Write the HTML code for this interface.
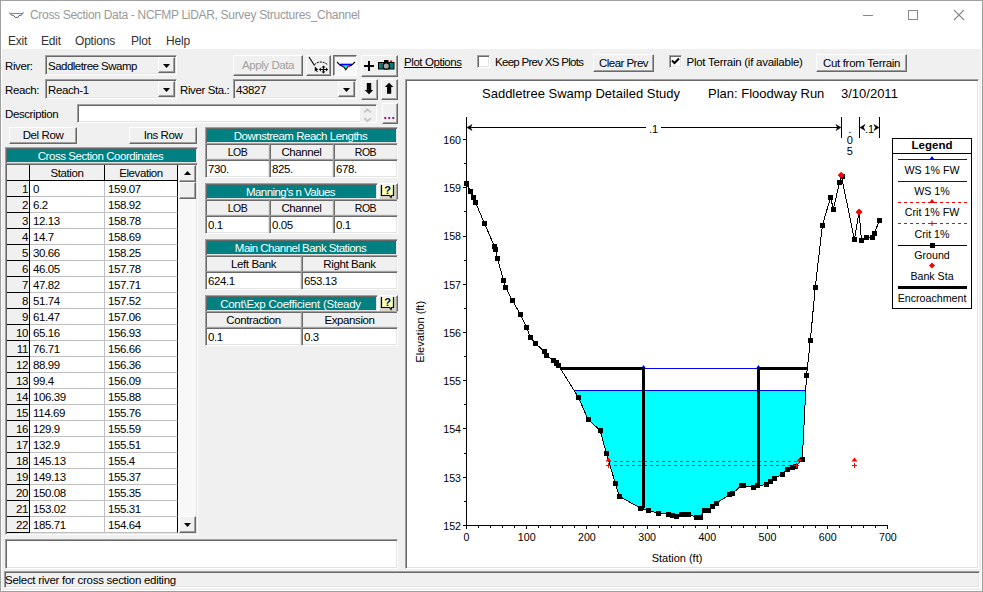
<!DOCTYPE html>
<html><head><meta charset="utf-8"><title>Cross Section Data</title>
<style>
html,body{margin:0;padding:0;background:#fff;}
body{width:983px;height:592px;overflow:hidden;position:relative;font-family:"Liberation Sans",sans-serif;font-size:11px;color:#000;}
.a{position:absolute;box-sizing:border-box;white-space:nowrap;}
.win{left:0;top:0;width:983px;height:592px;background:#fff;border:1px solid #a0a0a0;}
.grey{background:#f0f0f0;}
.t{font-size:11.5px;letter-spacing:-0.4px;line-height:13px;}
.sunk{border:1px solid;border-color:#808080 #fff #fff #808080;}
.sunk2{border:1px solid;border-color:#a0a0a0 #fff #fff #a0a0a0;box-shadow:inset 1px 1px 0 #696969, inset -1px -1px 0 #e3e3e3;}
.btn{background:#f0f0f0;border:1px solid;border-color:#fff #696969 #696969 #fff;box-shadow:inset -1px -1px 0 #a0a0a0, inset 1px 1px 0 #f0f0f0;text-align:center;}
.teal{background:#008080;color:#fff;text-align:center;border:1px solid;border-color:#a0a0a0 #fff #fff #a0a0a0;box-shadow:inset 1px 1px 0 #696969, inset -1px -1px 0 #e3e3e3;line-height:17px;padding-right:2px;}
.ch{background:#f0f0f0;text-align:center;border:1px solid;border-color:#a0a0a0 #fff #fff #a0a0a0;box-shadow:inset 1px 1px 0 #696969, inset -1px -1px 0 #e3e3e3;line-height:17px;}
.cv{background:#fff;border:1px solid;border-color:#a0a0a0 #fff #fff #a0a0a0;box-shadow:inset 1px 1px 0 #696969, inset -1px -1px 0 #e3e3e3;line-height:18px;padding-left:2px;}
.menu{font-size:12px;color:#333;top:33px;line-height:16px;letter-spacing:-0.2px;}
.rh{background:#f0f0f0;border-right:1px solid #000;border-bottom:1px solid #000;text-align:right;padding-right:1px;line-height:17px;height:16px;width:23px;left:7px;}
.c1{background:#fff;border-right:1px solid #c0c0c0;border-bottom:1px solid #c0c0c0;line-height:17px;height:16px;width:75px;left:30px;padding-left:3px;}
.c2{background:#fff;border-right:1px solid #000;border-bottom:1px solid #c0c0c0;line-height:17px;height:16px;width:73px;left:105px;padding-left:3px;}
</style></head><body>
<div class="a win"></div>
<div class="a grey" style="left:2px;top:49px;width:979px;height:541px;"></div>

<svg class="a" style="left:4px;top:4px" width="30" height="22" viewBox="4 4 30 22"><path d="M9.2 12.4L11.2 15L13.7 15.5L15.2 17.4H17.9L19 15.6L21.5 15.1L23.5 12.2" fill="none" stroke="#666" stroke-width="1"/><path d="M10.5 13.5H23" stroke="#7474ff" stroke-width="1.1"/></svg>
<div class="a" style="left:30px;top:7px;font-size:12px;color:#999;line-height:16px;letter-spacing:-0.31px;" id="title">Cross Section Data - NCFMP LiDAR, Survey Structures_Channel</div>
<svg class="a" style="left:855px;top:5px" width="120" height="22" viewBox="0 0 120 22"><path d="M8 10.5H18" stroke="#888" stroke-width="1"/><rect x="53.5" y="5.5" width="9" height="9" fill="none" stroke="#888" stroke-width="1"/><path d="M99 5L109 15M109 5L99 15" stroke="#888" stroke-width="1.1"/></svg>
<div class="a menu" style="left:8px">Exit</div>
<div class="a menu" style="left:41px">Edit</div>
<div class="a menu" style="left:75px">Options</div>
<div class="a menu" style="left:131px">Plot</div>
<div class="a menu" style="left:166px">Help</div>
<div class="a t" style="left:5px;top:60px">River:</div>
<div class="a t" style="left:5px;top:84px">Reach:</div>
<div class="a t" style="left:5px;top:108px">Description</div>
<div class="a t" style="left:180px;top:84px">River Sta.:</div>
<div class="a sunk2" style="left:45px;top:55px;width:132px;height:20px;background:#f0f0f0"></div>
<div class="a t" style="left:48px;top:60px;letter-spacing:-0.52px;">Saddletree Swamp</div>
<div class="a btn" style="left:158px;top:57px;width:17px;height:16px"></div>
<svg class="a" style="left:163px;top:64px" width="7" height="4"><path d="M0 0H7L3.5 4Z" fill="#000"/></svg>
<div class="a sunk2" style="left:45px;top:79px;width:132px;height:20px;background:#f0f0f0"></div>
<div class="a t" style="left:48px;top:84px">Reach-1</div>
<div class="a btn" style="left:158px;top:81px;width:17px;height:16px"></div>
<svg class="a" style="left:163px;top:88px" width="7" height="4"><path d="M0 0H7L3.5 4Z" fill="#000"/></svg>
<div class="a sunk2" style="left:233px;top:79px;width:124px;height:20px;background:#f0f0f0"></div>
<div class="a t" style="left:236px;top:84px">43827</div>
<div class="a btn" style="left:338px;top:81px;width:17px;height:16px"></div>
<svg class="a" style="left:343px;top:88px" width="7" height="4"><path d="M0 0H7L3.5 4Z" fill="#000"/></svg>
<div class="a btn t" style="left:233px;top:55px;width:70px;height:21px;color:#a0a0a0;line-height:18px;letter-spacing:-0.42px;">Apply Data</div>
<div class="a btn" style="left:306px;top:55px;width:25px;height:21px;"></div>
<div class="a" style="left:333px;top:55px;width:24px;height:21px;background:#f8f8f8;border:1px solid;border-color:#696969 #fff #fff #696969;box-shadow:inset 1px 1px 0 #a0a0a0;"></div>
<div class="a btn" style="left:361px;top:55px;width:37px;height:22px;"></div>
<svg class="a" style="left:300px;top:50px" width="100" height="30" viewBox="300 50 100 30">
<path d="M309 57L314.5 65.5" fill="none" stroke="#000" stroke-width="1.1"/>
<path d="M314.5 64.8C316 63 318 62.2 320 62C323 61.8 325 62.8 327.5 64.5" fill="none" stroke="#000" stroke-width="1" stroke-dasharray="2 1"/>
<path d="M314.8 66.5L318.3 69.8L316.8 70L317.8 71.8L317 72.2L316 70.4L314.8 71.4Z" fill="#000"/>
<path d="M319.5 69.5H327.5M323.5 66V73" stroke="#000" stroke-width="1.2" fill="none"/>
<path d="M319 69.5l2-2v4zM328 69.5l-2-2v4zM323.5 65.5l-2 2h4zM323.5 73.5l-2-2h4z" fill="#000"/>
<path d="M340.5 64.5H351.5L347.8 67L345.8 69.5L343.7 67Z" fill="#00ffff"/>
<path d="M340 64.5H352" stroke="#0000ff" stroke-width="1.6"/>
<path d="M337 62L340.2 65.3L343.7 66.8L345.8 69.7L347.8 66.8L351.4 65.3L355 62" fill="none" stroke="#000" stroke-width="1.1"/>
<rect x="342.7" y="66" width="1" height="1" fill="#f00"/><rect x="347.8" y="66" width="1" height="1" fill="#f00"/>
<path d="M364 66H374M369 61V71" stroke="#000" stroke-width="2"/>
<rect x="378.5" y="62.5" width="15.5" height="6.5" fill="#008080" stroke="#000"/>
<rect x="384" y="60" width="4.5" height="2.5" fill="#000"/>
<rect x="390" y="60.5" width="2.2" height="1.5" fill="#f00"/>
<circle cx="386.3" cy="66" r="3.2" fill="#a8a8a8" stroke="#000" stroke-width="1.3"/>
</svg>
<div class="a btn" style="left:361px;top:79px;width:17px;height:21px;"></div>
<div class="a btn" style="left:381px;top:79px;width:17px;height:21px;"></div>
<svg class="a" style="left:360px;top:78px" width="40" height="24" viewBox="360 78 40 24"><path d="M366.8 83H371.2V90H373.3L369 94.3L364.7 90H366.8Z" fill="#000"/><path d="M387 93.7H391.2V87H393.4L389.1 82.7L384.8 87H387Z" fill="#000"/></svg>
<div class="a sunk2" style="left:77px;top:104px;width:300px;height:19px;background:#fff"></div>
<div class="a" style="left:360px;top:106px;width:16px;height:16px;background:#f0f0f0"></div>
<svg class="a" style="left:362px;top:107px" width="12" height="16" viewBox="362 107 12 16"><path d="M364.3 112.3L367.5 109.3L370.7 112.3" fill="none" stroke="#c4c4c4" stroke-width="1.8"/><path d="M364.3 118.2L367.5 121.2L370.7 118.2" fill="none" stroke="#c4c4c4" stroke-width="1.8"/></svg>
<div class="a btn" style="left:382px;top:103px;width:16px;height:21px;"></div>
<div class="a" style="left:383.5px;top:109px;width:12px;height:12px;font-size:12px;line-height:12px;color:#800080;font-weight:bold;letter-spacing:0.6px;text-align:center;">...</div>
<div class="a btn t" style="left:9px;top:127px;width:68px;height:17px;line-height:15px;">Del Row</div>
<div class="a btn t" style="left:129px;top:127px;width:68px;height:17px;line-height:15px;">Ins Row</div>
<div class="a teal t" style="left:5px;top:147px;width:193px;height:17px;letter-spacing:-0.45px;">Cross Section Coordinates</div>
<div class="a sunk2" style="left:5px;top:163px;width:193px;height:372px;background:#fff;"></div>
<div class="a" style="left:7px;top:165px;width:23px;height:16px;background:#f0f0f0;border-right:1px solid #000;border-bottom:1px solid #000;"></div>
<div class="a t" style="left:30px;top:165px;width:75px;height:16px;background:#f0f0f0;border-right:1px solid #000;border-bottom:1px solid #000;text-align:center;line-height:17px;">Station</div>
<div class="a t" style="left:105px;top:165px;width:73px;height:16px;background:#f0f0f0;border-right:1px solid #000;border-bottom:1px solid #000;text-align:center;line-height:17px;">Elevation</div>
<div class="a t rh" style="top:181px">1</div><div class="a t c1" style="top:181px">0</div><div class="a t c2" style="top:181px">159.07</div>
<div class="a t rh" style="top:197px">2</div><div class="a t c1" style="top:197px">6.2</div><div class="a t c2" style="top:197px">158.92</div>
<div class="a t rh" style="top:213px">3</div><div class="a t c1" style="top:213px">12.13</div><div class="a t c2" style="top:213px">158.78</div>
<div class="a t rh" style="top:229px">4</div><div class="a t c1" style="top:229px">14.7</div><div class="a t c2" style="top:229px">158.69</div>
<div class="a t rh" style="top:245px">5</div><div class="a t c1" style="top:245px">30.66</div><div class="a t c2" style="top:245px">158.25</div>
<div class="a t rh" style="top:261px">6</div><div class="a t c1" style="top:261px">46.05</div><div class="a t c2" style="top:261px">157.78</div>
<div class="a t rh" style="top:277px">7</div><div class="a t c1" style="top:277px">47.82</div><div class="a t c2" style="top:277px">157.71</div>
<div class="a t rh" style="top:293px">8</div><div class="a t c1" style="top:293px">51.74</div><div class="a t c2" style="top:293px">157.52</div>
<div class="a t rh" style="top:309px">9</div><div class="a t c1" style="top:309px">61.47</div><div class="a t c2" style="top:309px">157.06</div>
<div class="a t rh" style="top:325px">10</div><div class="a t c1" style="top:325px">65.16</div><div class="a t c2" style="top:325px">156.93</div>
<div class="a t rh" style="top:341px">11</div><div class="a t c1" style="top:341px">76.71</div><div class="a t c2" style="top:341px">156.66</div>
<div class="a t rh" style="top:357px">12</div><div class="a t c1" style="top:357px">88.99</div><div class="a t c2" style="top:357px">156.36</div>
<div class="a t rh" style="top:373px">13</div><div class="a t c1" style="top:373px">99.4</div><div class="a t c2" style="top:373px">156.09</div>
<div class="a t rh" style="top:389px">14</div><div class="a t c1" style="top:389px">106.39</div><div class="a t c2" style="top:389px">155.88</div>
<div class="a t rh" style="top:405px">15</div><div class="a t c1" style="top:405px">114.69</div><div class="a t c2" style="top:405px">155.76</div>
<div class="a t rh" style="top:421px">16</div><div class="a t c1" style="top:421px">129.9</div><div class="a t c2" style="top:421px">155.59</div>
<div class="a t rh" style="top:437px">17</div><div class="a t c1" style="top:437px">132.9</div><div class="a t c2" style="top:437px">155.51</div>
<div class="a t rh" style="top:453px">18</div><div class="a t c1" style="top:453px">145.13</div><div class="a t c2" style="top:453px">155.4</div>
<div class="a t rh" style="top:469px">19</div><div class="a t c1" style="top:469px">149.13</div><div class="a t c2" style="top:469px">155.37</div>
<div class="a t rh" style="top:485px">20</div><div class="a t c1" style="top:485px">150.08</div><div class="a t c2" style="top:485px">155.35</div>
<div class="a t rh" style="top:501px">21</div><div class="a t c1" style="top:501px">153.02</div><div class="a t c2" style="top:501px">155.31</div>
<div class="a t rh" style="top:517px">22</div><div class="a t c1" style="top:517px">185.71</div><div class="a t c2" style="top:517px">154.64</div>
<div class="a" style="left:178px;top:165px;width:18px;height:368px;background:#f8f8f8;"></div>
<div class="a btn" style="left:179px;top:165px;width:17px;height:17px;"></div>
<svg class="a" style="left:184px;top:171px" width="7" height="4"><path d="M0 4H7L3.5 0Z" fill="#000"/></svg>
<div class="a btn" style="left:179px;top:182px;width:17px;height:17px;"></div>
<div class="a btn" style="left:179px;top:516px;width:17px;height:17px;"></div>
<svg class="a" style="left:184px;top:523px" width="7" height="4"><path d="M0 0H7L3.5 4Z" fill="#000"/></svg>
<div class="a teal t" style="left:205px;top:127px;width:193px;height:17px;letter-spacing:-0.48px;">Downstream Reach Lengths</div>
<div class="a ch t" style="left:205px;top:143px;width:65px;height:17px;font-size:10.5px;letter-spacing:-0.5px;">LOB</div>
<div class="a ch t" style="left:269px;top:143px;width:65px;height:17px;">Channel</div>
<div class="a ch t" style="left:333px;top:143px;width:65px;height:17px;font-size:10.5px;letter-spacing:-0.5px;">ROB</div>
<div class="a cv t" style="left:205px;top:159px;width:65px;height:19px;">730.</div>
<div class="a cv t" style="left:269px;top:159px;width:65px;height:19px;">825.</div>
<div class="a cv t" style="left:333px;top:159px;width:65px;height:19px;">678.</div>
<div class="a teal t" style="left:205px;top:183px;width:173px;height:17px;letter-spacing:-0.56px;">Manning's n Values</div>
<div class="a btn" style="left:378px;top:183px;width:20px;height:18px;background:#d8d4cc"></div>
<svg class="a" style="left:380px;top:184px" width="16" height="16" viewBox="0 0 16 16"><path d="M1.5 1V11.5H9.5L11 13.5L11.5 11.5H13.5V1" fill="#ffffb0" stroke="#000" stroke-width="1.2"/><text x="7.6" y="10.3" font-size="11" font-weight="bold" fill="#000080" text-anchor="middle" font-family="'Liberation Sans',sans-serif">?</text></svg>
<div class="a ch t" style="left:205px;top:199px;width:65px;height:17px;font-size:10.5px;letter-spacing:-0.5px;">LOB</div>
<div class="a ch t" style="left:269px;top:199px;width:65px;height:17px;">Channel</div>
<div class="a ch t" style="left:333px;top:199px;width:65px;height:17px;font-size:10.5px;letter-spacing:-0.5px;">ROB</div>
<div class="a cv t" style="left:205px;top:215px;width:65px;height:19px;">0.1</div>
<div class="a cv t" style="left:269px;top:215px;width:65px;height:19px;">0.05</div>
<div class="a cv t" style="left:333px;top:215px;width:65px;height:19px;">0.1</div>
<div class="a teal t" style="left:205px;top:239px;width:193px;height:17px;letter-spacing:-0.53px;">Main Channel Bank Stations</div>
<div class="a ch t" style="left:205px;top:255px;width:97px;height:17px;">Left Bank</div>
<div class="a ch t" style="left:301px;top:255px;width:97px;height:17px;">Right Bank</div>
<div class="a cv t" style="left:205px;top:271px;width:97px;height:19px;">624.1</div>
<div class="a cv t" style="left:301px;top:271px;width:97px;height:19px;">653.13</div>
<div class="a teal t" style="left:205px;top:295px;width:173px;height:17px;letter-spacing:-0.24px;">Cont\Exp Coefficient (Steady</div>
<div class="a btn" style="left:378px;top:295px;width:20px;height:18px;background:#d8d4cc"></div>
<svg class="a" style="left:380px;top:296px" width="16" height="16" viewBox="0 0 16 16"><path d="M1.5 1V11.5H9.5L11 13.5L11.5 11.5H13.5V1" fill="#ffffb0" stroke="#000" stroke-width="1.2"/><text x="7.6" y="10.3" font-size="11" font-weight="bold" fill="#000080" text-anchor="middle" font-family="'Liberation Sans',sans-serif">?</text></svg>
<div class="a ch t" style="left:205px;top:311px;width:97px;height:17px;">Contraction</div>
<div class="a ch t" style="left:301px;top:311px;width:97px;height:17px;">Expansion</div>
<div class="a cv t" style="left:205px;top:327px;width:97px;height:19px;">0.1</div>
<div class="a cv t" style="left:301px;top:327px;width:97px;height:19px;">0.3</div>
<div class="a sunk2" style="left:5px;top:539px;width:393px;height:30px;background:#fff"></div>
<div class="a sunk2" style="left:4px;top:571px;width:976px;height:17px;"></div>
<div class="a t" style="left:5px;top:574px;letter-spacing:-0.28px;">Select river for cross section editing</div>
<div class="a t" style="left:404px;top:56px;text-decoration:underline;letter-spacing:-0.42px;">Plot Options</div>
<div class="a sunk2" style="left:477px;top:55px;width:13px;height:13px;background:#fff;"></div>
<div class="a t" style="left:495px;top:56px;letter-spacing:-0.71px;">Keep Prev XS Plots</div>
<div class="a btn t" style="left:593px;top:54px;width:61px;height:18px;line-height:16px;letter-spacing:-0.54px;">Clear Prev</div>
<div class="a sunk2" style="left:669px;top:55px;width:13px;height:13px;background:#fff;"></div>
<svg class="a" style="left:671px;top:57px" width="9" height="9"><path d="M1 3.5L3.5 6L8 1.5" fill="none" stroke="#000" stroke-width="2"/></svg>
<div class="a t" style="left:686.5px;top:56px;letter-spacing:-0.26px;">Plot Terrain (if available)</div>
<div class="a btn t" style="left:816px;top:54px;width:91px;height:18px;line-height:16px;letter-spacing:-0.32px;">Cut from Terrain</div>
<div class="a sunk2" style="left:405px;top:79px;width:574px;height:490px;background:#fff"></div>
<svg class="a" style="left:0;top:0" width="983" height="592" viewBox="0 0 983 592" font-family="'Liberation Sans',sans-serif">
<polygon points="574.3,390.5 578.5,397.5 588,419.3 600.2,430.5 606.4,453.4 615.3,483.2 619.4,496.3 640.6,508.2 648.2,510.3 658.1,513.3 668.1,514.2 672.2,515.3 676.5,516 681.4,514.8 685.2,514.2 688.7,514.2 696.6,517.3 700.4,517.3 704.4,510.3 708.4,510.3 712.3,506.2 716.1,503.1 729.7,494.8 732.4,493.5 741.1,485.9 743.8,485.9 753.2,487.1 757,485.9 766.9,484.4 770.4,481.8 774.5,478 782.4,474.2 787.5,469.2 792,467.4 795.8,466.2 802.3,459.2 805.7,390.5" fill="#00ffff"/>
<path d="M574 390.5 H806" stroke="#0000ff" stroke-width="1" shape-rendering="crispEdges"/>
<path d="M644 368.5 H758" stroke="#0000ff" stroke-width="1" shape-rendering="crispEdges"/>
<path d="M608 461.5H800" stroke="#ff0000" stroke-width="1" stroke-dasharray="3 3" shape-rendering="crispEdges"/>
<path d="M608 465.5H797" stroke="#ff0000" stroke-width="1" stroke-dasharray="3 3" shape-rendering="crispEdges"/>
<polyline points="466.5,183.5 470.5,191.5 473.5,197.5 475.5,202.5 484.5,223.5 494.5,246.5 495.5,249.5 497.5,258.5 503.5,280.5 505.5,287.5 512.5,300.5 520.5,314.5 526.5,327.5 530.5,337.5 535.5,343.5 544.5,351.5 546.5,355.5 553.5,360.5 556.5,362.5 556.5,363.5 558.5,365.5 578.5,397.5 588,419.3 600.2,430.5 606.4,453.4 615.3,483.2 619.4,496.3 640.6,508.2 648.2,510.3 658.1,513.3 668.1,514.2 672.2,515.3 676.5,516 681.4,514.8 685.2,514.2 688.7,514.2 696.6,517.3 700.4,517.3 704.4,510.3 708.4,510.3 712.3,506.2 716.1,503.1 729.7,494.8 732.4,493.5 741.1,485.9 743.8,485.9 753.2,487.1 757,485.9 766.9,484.4 770.4,481.8 774.5,478 782.4,474.2 787.5,469.2 792,467.4 795.8,466.2 802.3,459.2 806.5,375.5 810.4,340 815.2,287.8 822.4,225.3 830.5,197.5 833.4,209 839.5,182.4 841.2,175.2 854.4,239.3 859.1,212 861.4,240.1 866.3,237.3 872.1,237.3 874.3,233.3 879.6,220.2" fill="none" stroke="#000" stroke-width="1" shape-rendering="crispEdges"/>
<rect x="464" y="181" width="5" height="5" fill="#000"/>
<rect x="468" y="189" width="5" height="5" fill="#000"/>
<rect x="471" y="195" width="5" height="5" fill="#000"/>
<rect x="473" y="200" width="5" height="5" fill="#000"/>
<rect x="482" y="221" width="5" height="5" fill="#000"/>
<rect x="492" y="244" width="5" height="5" fill="#000"/>
<rect x="493" y="247" width="5" height="5" fill="#000"/>
<rect x="495" y="256" width="5" height="5" fill="#000"/>
<rect x="501" y="278" width="5" height="5" fill="#000"/>
<rect x="503" y="285" width="5" height="5" fill="#000"/>
<rect x="510" y="298" width="5" height="5" fill="#000"/>
<rect x="518" y="312" width="5" height="5" fill="#000"/>
<rect x="524" y="325" width="5" height="5" fill="#000"/>
<rect x="528" y="335" width="5" height="5" fill="#000"/>
<rect x="533" y="341" width="5" height="5" fill="#000"/>
<rect x="542" y="349" width="5" height="5" fill="#000"/>
<rect x="544" y="353" width="5" height="5" fill="#000"/>
<rect x="551" y="358" width="5" height="5" fill="#000"/>
<rect x="554" y="360" width="5" height="5" fill="#000"/>
<rect x="554" y="361" width="5" height="5" fill="#000"/>
<rect x="556" y="363" width="5" height="5" fill="#000"/>
<rect x="576" y="395" width="5" height="5" fill="#000"/>
<rect x="586" y="417" width="5" height="5" fill="#000"/>
<rect x="598" y="428" width="5" height="5" fill="#000"/>
<rect x="604" y="451" width="5" height="5" fill="#000"/>
<rect x="613" y="481" width="5" height="5" fill="#000"/>
<rect x="617" y="494" width="5" height="5" fill="#000"/>
<rect x="638" y="506" width="5" height="5" fill="#000"/>
<rect x="646" y="508" width="5" height="5" fill="#000"/>
<rect x="656" y="511" width="5" height="5" fill="#000"/>
<rect x="666" y="512" width="5" height="5" fill="#000"/>
<rect x="670" y="513" width="5" height="5" fill="#000"/>
<rect x="674" y="514" width="5" height="5" fill="#000"/>
<rect x="679" y="512" width="5" height="5" fill="#000"/>
<rect x="683" y="512" width="5" height="5" fill="#000"/>
<rect x="686" y="512" width="5" height="5" fill="#000"/>
<rect x="694" y="515" width="5" height="5" fill="#000"/>
<rect x="698" y="515" width="5" height="5" fill="#000"/>
<rect x="702" y="508" width="5" height="5" fill="#000"/>
<rect x="706" y="508" width="5" height="5" fill="#000"/>
<rect x="710" y="504" width="5" height="5" fill="#000"/>
<rect x="714" y="501" width="5" height="5" fill="#000"/>
<rect x="727" y="492" width="5" height="5" fill="#000"/>
<rect x="730" y="491" width="5" height="5" fill="#000"/>
<rect x="739" y="483" width="5" height="5" fill="#000"/>
<rect x="741" y="483" width="5" height="5" fill="#000"/>
<rect x="751" y="485" width="5" height="5" fill="#000"/>
<rect x="755" y="483" width="5" height="5" fill="#000"/>
<rect x="764" y="482" width="5" height="5" fill="#000"/>
<rect x="768" y="479" width="5" height="5" fill="#000"/>
<rect x="772" y="476" width="5" height="5" fill="#000"/>
<rect x="780" y="472" width="5" height="5" fill="#000"/>
<rect x="785" y="467" width="5" height="5" fill="#000"/>
<rect x="790" y="465" width="5" height="5" fill="#000"/>
<rect x="793" y="464" width="5" height="5" fill="#000"/>
<rect x="800" y="457" width="5" height="5" fill="#000"/>
<rect x="804" y="373" width="5" height="5" fill="#000"/>
<rect x="808" y="338" width="5" height="5" fill="#000"/>
<rect x="813" y="285" width="5" height="5" fill="#000"/>
<rect x="820" y="223" width="5" height="5" fill="#000"/>
<rect x="828" y="195" width="5" height="5" fill="#000"/>
<rect x="831" y="207" width="5" height="5" fill="#000"/>
<rect x="837" y="180" width="5" height="5" fill="#000"/>
<rect x="840" y="174" width="5" height="5" fill="#000"/>
<rect x="852" y="237" width="5" height="5" fill="#000"/>
<rect x="859" y="238" width="5" height="5" fill="#000"/>
<rect x="864" y="235" width="5" height="5" fill="#000"/>
<rect x="870" y="235" width="5" height="5" fill="#000"/>
<rect x="872" y="231" width="5" height="5" fill="#000"/>
<rect x="877" y="218" width="5" height="5" fill="#000"/>
<path d="M643.5 365l2.5 3.5h-5z" fill="#0000ff"/>
<path d="M758.5 365l2.5 3.5h-5z" fill="#0000ff"/>
<path d="M560 368.5H643.5V508M807 368.5H758.5V486" fill="none" stroke="#000" stroke-width="3" shape-rendering="crispEdges"/>
<path d="M608.5 457.5l3 4h-6z" fill="#ff0000"/>
<path d="M799.5 457.5l3 4h-6z" fill="#ff0000"/>
<path d="M854.5 457.5l3 4h-6z" fill="#ff0000"/>
<path d="M606 465.5h5M608.5 463v5" stroke="#ff0000" stroke-width="1"/>
<path d="M794 465.5h5M796.5 463v5" stroke="#ff0000" stroke-width="1"/>
<path d="M852 465.5h5M854.5 463v5" stroke="#ff0000" stroke-width="1"/>
<path d="M841.2 172.2l3 3l-3 3l-3-3z" fill="#ff0000" stroke="#ff0000" stroke-width="1"/>
<path d="M859.1 209l3 3l-3 3l-3-3z" fill="#ff0000" stroke="#ff0000" stroke-width="1"/>
<path d="M466.5 117V525.5H888" fill="none" stroke="#000" stroke-width="1" shape-rendering="crispEdges"/>
<path d="M463 139.5H466M464 163.5H466M463 187.5H466M464 211.5H466M463 236.5H466M464 260.5H466M463 284.5H466M464 308.5H466M463 332.5H466M464 356.5H466M463 380.5H466M464 404.5H466M463 428.5H466M464 453.5H466M463 477.5H466M464 501.5H466M463 525.5H466M466.5 526V529M478.5 526V528M490.5 526V528M502.5 526V528M514.5 526V528M526.5 526V529M538.5 526V528M550.5 526V528M562.5 526V528M574.5 526V528M586.5 526V529M598.5 526V528M610.5 526V528M623.5 526V528M635.5 526V528M647.5 526V529M659.5 526V528M671.5 526V528M683.5 526V528M695.5 526V528M707.5 526V529M719.5 526V528M731.5 526V528M743.5 526V528M755.5 526V528M767.5 526V529M779.5 526V528M791.5 526V528M803.5 526V528M815.5 526V528M827.5 526V529M839.5 526V528M851.5 526V528M863.5 526V528M875.5 526V528M887.5 526V529" stroke="#000" stroke-width="1" shape-rendering="crispEdges"/>
<text x="461" y="143.9" font-size="10.67" text-anchor="end">160</text>
<text x="461" y="192.2" font-size="10.67" text-anchor="end">159</text>
<text x="461" y="240.4" font-size="10.67" text-anchor="end">158</text>
<text x="461" y="288.6" font-size="10.67" text-anchor="end">157</text>
<text x="461" y="336.9" font-size="10.67" text-anchor="end">156</text>
<text x="461" y="385.1" font-size="10.67" text-anchor="end">155</text>
<text x="461" y="433.4" font-size="10.67" text-anchor="end">154</text>
<text x="461" y="481.6" font-size="10.67" text-anchor="end">153</text>
<text x="461" y="529.9" font-size="10.67" text-anchor="end">152</text>
<text x="466.5" y="541" font-size="10.67" text-anchor="middle">0</text>
<text x="526.7" y="541" font-size="10.67" text-anchor="middle">100</text>
<text x="586.9" y="541" font-size="10.67" text-anchor="middle">200</text>
<text x="647.1" y="541" font-size="10.67" text-anchor="middle">300</text>
<text x="707.3" y="541" font-size="10.67" text-anchor="middle">400</text>
<text x="767.5" y="541" font-size="10.67" text-anchor="middle">500</text>
<text x="827.7" y="541" font-size="10.67" text-anchor="middle">600</text>
<text x="887.9" y="541" font-size="10.67" text-anchor="middle">700</text>
<text x="677" y="562" font-size="11" text-anchor="middle">Station (ft)</text>
<text transform="translate(423.5,331.8) rotate(-90)" font-size="11" text-anchor="middle">Elevation (ft)</text>
<text x="482" y="98" font-size="13">Saddletree Swamp Detailed Study</text>
<text x="708" y="98" font-size="13">Plan: Floodway Run</text>
<text x="841" y="98" font-size="13">3/10/2011</text>
<path d="M841.5 117V138M859.5 117V138M879.5 117V138" stroke="#000" stroke-width="1" shape-rendering="crispEdges"/>
<path d="M468 127.5H646M661 127.5H840" stroke="#000" stroke-width="1" shape-rendering="crispEdges"/>
<path d="M467 127.5L472 124.5L470.5 127.5L472 130.5ZM841 127.5L836 124.5L837.5 127.5L836 130.5ZM860 127.5L865 124.5L863.5 127.5L865 130.5ZM879 127.5L874 124.5L875.5 127.5L874 130.5Z" fill="#000" stroke="#000" stroke-width="0.5"/>
<text x="653.5" y="132.8" font-size="11" text-anchor="middle">.1</text>
<text x="869.5" y="132.8" font-size="11" text-anchor="middle">.1</text>
<text x="849.8" y="132.8" font-size="11" text-anchor="middle">.</text>
<text x="849.8" y="143.8" font-size="11" text-anchor="middle">0</text>
<text x="849.8" y="154.8" font-size="11" text-anchor="middle">5</text>
<rect x="892.5" y="138.5" width="79" height="170" fill="#fff" stroke="#000" shape-rendering="crispEdges"/>
<path d="M892 153.5H972" stroke="#000" shape-rendering="crispEdges"/>
<text x="932" y="149" font-size="11.5" font-weight="bold" text-anchor="middle">Legend</text>
<path d="M898 159.5H967M898 181.5H967" stroke="#0000ff" shape-rendering="crispEdges"/>
<path d="M932 156l2.5 3.5h-5z" fill="#0000ff"/>
<path d="M898 202.5H967M898 223.5H967" stroke="#ff0000" stroke-dasharray="3 3" shape-rendering="crispEdges"/>
<path d="M932 199l3 4h-6z" fill="#ff0000"/>
<path d="M929.5 223.5h5M932 221v5" stroke="#ff0000"/>
<path d="M898 245.5H967" stroke="#000" shape-rendering="crispEdges"/>
<rect x="930" y="243" width="5" height="5" fill="#000"/>
<path d="M932 262.5l3 3l-3 3l-3-3z" fill="#ff0000"/>
<path d="M898 287.5H967" stroke="#000" stroke-width="3" shape-rendering="crispEdges"/>
<text x="932" y="174" font-size="10.67" text-anchor="middle">WS 1% FW</text>
<text x="932" y="195" font-size="10.67" text-anchor="middle">WS 1%</text>
<text x="932" y="216" font-size="10.67" text-anchor="middle">Crit 1% FW</text>
<text x="932" y="238" font-size="10.67" text-anchor="middle">Crit 1%</text>
<text x="932" y="259" font-size="10.67" text-anchor="middle">Ground</text>
<text x="932" y="280" font-size="10.67" text-anchor="middle">Bank Sta</text>
<text x="932" y="302" font-size="10.67" text-anchor="middle">Encroachment</text>
</svg>
</body></html>
